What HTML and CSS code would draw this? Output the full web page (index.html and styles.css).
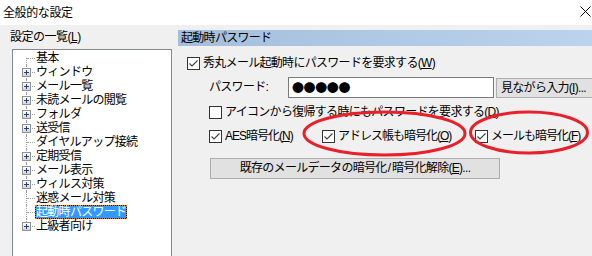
FILE: index.html
```html
<!DOCTYPE html>
<html lang="ja">
<head>
<meta charset="utf-8">
<link rel="stylesheet" href="styles.css">
</head>
<body>
<div class="window">
  <div class="titlebar">
    <span class="title">全般的な設定</span>
    <svg class="close" width="11" height="11" viewBox="0 0 11 11"><path d="M0.5 0.5L10.5 10.5M10.5 0.5L0.5 10.5" stroke="#000" stroke-width="1"/></svg>
  </div>
  <div class="main">
    <div class="left">
      <div class="label">設定の一覧(<u>L</u>)</div>
      <div class="tree">
        <div class="row first"><span class="gut"></span><span class="txt">基本</span></div>
        <div class="row"><span class="gut"><span class="exp"></span></span><span class="txt">ウィンドウ</span></div>
        <div class="row"><span class="gut"><span class="exp"></span></span><span class="txt">メール一覧</span></div>
        <div class="row"><span class="gut"><span class="exp"></span></span><span class="txt">未読メールの閲覧</span></div>
        <div class="row"><span class="gut"><span class="exp"></span></span><span class="txt">フォルダ</span></div>
        <div class="row"><span class="gut"><span class="exp"></span></span><span class="txt">送受信</span></div>
        <div class="row"><span class="gut"></span><span class="txt">ダイヤルアップ接続</span></div>
        <div class="row"><span class="gut"><span class="exp"></span></span><span class="txt">定期受信</span></div>
        <div class="row"><span class="gut"><span class="exp"></span></span><span class="txt">メール表示</span></div>
        <div class="row"><span class="gut"><span class="exp"></span></span><span class="txt">ウィルス対策</span></div>
        <div class="row"><span class="gut"></span><span class="txt">迷惑メール対策</span></div>
        <div class="row"><span class="gut"></span><span class="txt sel">起動時パスワード</span></div>
        <div class="row last"><span class="gut"><span class="exp"></span></span><span class="txt">上級者向け</span></div>
      </div>
    </div>
    <div class="right">
      <div class="header">起動時パスワード</div>
      <div class="content">
        <div class="cb r1">
          <span class="box"><svg width="11" height="11" viewBox="0 0 11 11"><path d="M1.5 5.5L4 8L9.5 2.5" fill="none" stroke="#404040" stroke-width="1.1"/></svg></span>
          <span>秀丸メール起動時にパスワードを要求する(<u>W</u>)</span>
        </div>
        <div class="pwrow">
          <span class="pwlabel">パスワード:</span>
          <div class="input">●●●●●</div>
          <div class="btn see">見ながら入力(<u>I</u>)...</div>
        </div>
        <div class="cb r2">
          <span class="box"></span>
          <span>アイコンから復帰する時にもパスワードを要求する(<u>D</u>)</span>
        </div>
        <div class="r3">
          <div class="cb c1">
            <span class="box"><svg width="11" height="11" viewBox="0 0 11 11"><path d="M1.5 5.5L4 8L9.5 2.5" fill="none" stroke="#404040" stroke-width="1.1"/></svg></span>
            <span>AES暗号化(<u>N</u>)</span>
          </div>
          <div class="cb c2">
            <span class="box"><svg width="11" height="11" viewBox="0 0 11 11"><path d="M1.5 5.5L4 8L9.5 2.5" fill="none" stroke="#404040" stroke-width="1.1"/></svg></span>
            <span>アドレス帳も暗号化(<u>O</u>)</span>
          </div>
          <div class="cb c3">
            <span class="box"><svg width="11" height="11" viewBox="0 0 11 11"><path d="M1.5 5.5L4 8L9.5 2.5" fill="none" stroke="#404040" stroke-width="1.1"/></svg></span>
            <span>メールも暗号化(<u>F</u>)</span>
          </div>
        </div>
        <div class="btn wide">既存のメールデータの暗号化<span class="slash">/</span>暗号化解除(<u>E</u>)...</div>
      </div>
    </div>
  </div>
  <svg class="marks" width="592" height="256" viewBox="0 0 592 256">
    <ellipse cx="384.5" cy="133.5" rx="80.5" ry="21.5" fill="none" stroke="#e8202a" stroke-width="3"/>
    <ellipse cx="529" cy="132.5" rx="58.5" ry="20.5" fill="none" stroke="#e8202a" stroke-width="3"/>
  </svg>
</div>
</body>
</html>
```
FILE: styles.css
```css
* { box-sizing: border-box; }
html, body { margin: 0; padding: 0; }
body {
  width: 592px;
  height: 256px;
  overflow: hidden;
  font-family: "Liberation Sans", "Noto Sans CJK JP", sans-serif;
  font-size: 12px;
  letter-spacing: -0.7px;
  color: #000;
  background: #f0f0f0;
}
u { text-decoration: underline; text-underline-offset: 1px; }
.window { position: relative; width: 592px; height: 256px; overflow: hidden; }
.titlebar {
  height: 25px;
  background: #fff;
  display: flex;
  align-items: center;
  justify-content: space-between;
  padding: 0 1px 0 3px;
}
.title { line-height: 14px; margin-top: 1px; letter-spacing: -0.4px; }
.close { margin-top: -2px; }
.main { display: flex; height: 231px; }
.left { width: 178px; flex: none; }
.label { line-height: 14px; margin: 5px 0 5px 10px; letter-spacing: -0.5px; }
.tree {
  margin-left: 12px;
  width: 160px;
  height: 207px;
  background: #fff;
  border: 1px solid #828790;
  border-bottom: none;
  padding-top: 1px;
}
.row { display: flex; height: 14px; }
.gut { position: relative; width: 22px; height: 14px; flex: none; }
.gut::before {
  content: "";
  position: absolute;
  left: 13px; top: 0; bottom: 0;
  border-left: 1px dotted #a0a0a0;
}
.gut::after {
  content: "";
  position: absolute;
  left: 14px; top: 7px; width: 8px;
  border-top: 1px dotted #a0a0a0;
}
.first .gut::before { top: 7px; }
.last .gut::before { bottom: 7px; }
.exp {
  position: absolute;
  left: 9px; top: 3px;
  width: 9px; height: 9px;
  z-index: 1;
  border: 1px solid #919191;
  background:
    linear-gradient(#21427e, #21427e) center / 5px 1px no-repeat,
    linear-gradient(#21427e, #21427e) center / 1px 5px no-repeat,
    linear-gradient(#ffffff, #d4d4d4);
}
.txt {
  line-height: 12px;
  height: 14px;
  border: 1px solid transparent;
  white-space: nowrap;
}
.txt.sel {
  color: #fff;
  border: 1px dotted #e07a10;
  background: linear-gradient(#3399ff, #3399ff) padding-box, linear-gradient(#000, #000) border-box;
}
.right { flex: 1; min-width: 0; }
.header {
  margin-top: 5px;
  height: 16px;
  line-height: 16px;
  padding-left: 3px;
  background: linear-gradient(to right, #a4bedc, #bbd3ec);
}
.content { display: flex; flex-direction: column; align-items: flex-start; }
.cb { display: flex; align-items: center; height: 14px; line-height: 14px; white-space: nowrap; }
.box {
  width: 13px; height: 13px;
  flex: none;
  border: 1px solid #333;
  background: #fff;
  margin-right: 3px;
  display: flex; align-items: center; justify-content: center;
}
.box svg { display: block; }
.r1 { margin: 10px 0 0 9px; }
.pwrow { display: flex; align-items: flex-start; margin: 7px 0 0 31px; height: 21px; }
.pwlabel { width: 79px; line-height: 21px; }
.input {
  width: 206px; height: 21px;
  border: 1px solid #7a7a7a;
  background: #fff;
  line-height: 19px;
  padding-left: 3px;
  font-family: "Noto Sans CJK JP", sans-serif;
  letter-spacing: -0.4px;
  overflow: hidden;
}
.btn {
  background: #e1e1e1;
  border: 1px solid #adadad;
  white-space: nowrap;
  text-align: center;
}
.see { margin: 1px 0 0 2px; width: 110px; height: 20px; line-height: 18px; text-align: left; padding-left: 4px; flex: none; }
.r2 { margin: 7px 0 0 31px; }
.r3 { display: flex; margin: 10px 0 0 31px; letter-spacing: -1px; }
.c1 { width: 113px; }
.c2 { width: 153px; }
.wide { margin: 15px 0 0 32px; width: 290px; height: 21px; line-height: 19px; }
.slash { letter-spacing: 0; margin: 0 1px; }
.marks { position: absolute; left: 0; top: 0; pointer-events: none; }
```
